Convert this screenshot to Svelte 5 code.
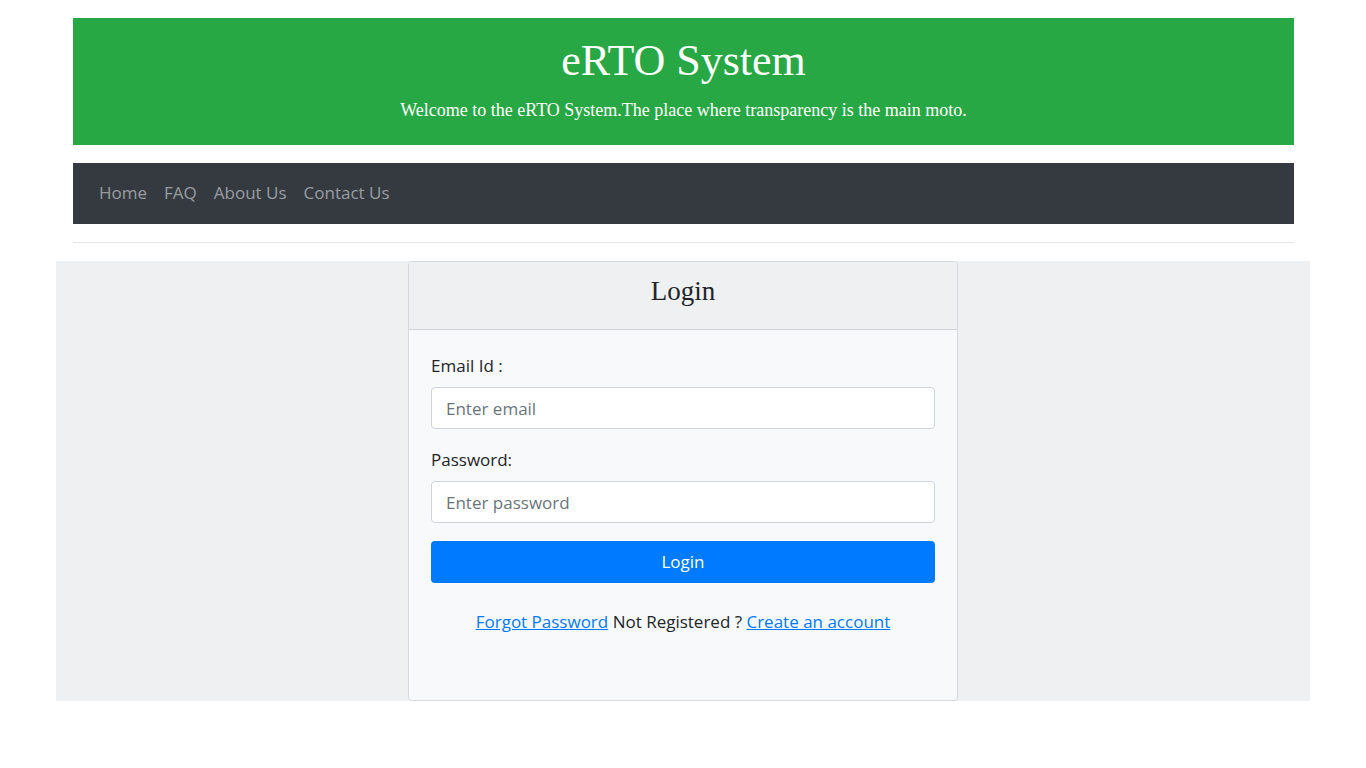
<script>
  const nav = ['Home', 'FAQ', 'About Us', 'Contact Us'];
</script>

<div class="page">
  <header>
    <h1>eRTO System</h1>
    <p>Welcome to the eRTO System.The place where transparency is the main moto.</p>
  </header>
  <nav>
    {#each nav as item}
      <a href="#top">{item}</a>
    {/each}
  </nav>
  <hr />
  <main>
    <section class="card">
      <div class="card-head"><h2>Login</h2></div>
      <form onsubmit={(e) => e.preventDefault()}>
        <label for="email">Email Id :</label>
        <input id="email" type="email" placeholder="Enter email" />
        <label for="password">Password:</label>
        <input id="password" type="password" placeholder="Enter password" />
        <button type="submit">Login</button>
        <p class="links"><a href="#forgot">Forgot Password</a> Not Registered ? <a href="#create">Create an account</a></p>
      </form>
    </section>
  </main>
</div>

<style>
  :global(body) {
    margin: 0;
    background: #fff;
  }
  .page {
    box-sizing: border-box;
    padding: 18px 56px 0;
    font-family: "Segoe UI", "Open Sans", "Noto Sans", sans-serif;
    font-size: 17px;
    line-height: 26px;
    color: #212529;
  }
  header {
    margin: 0 16px 18px 17px;
    padding: 16px 0 21px;
    background: #28a745;
    color: #fff;
    text-align: center;
    font-family: "Times New Roman", "Liberation Serif", serif;
  }
  h1 {
    margin: 0 0 8px;
    font-size: 44px;
    line-height: 54px;
    font-weight: 400;
  }
  header p {
    margin: 0;
    font-size: 18px;
    line-height: 28px;
  }
  nav {
    display: flex;
    flex-wrap: wrap;
    align-items: center;
    gap: 17px;
    margin: 0 16px 18px 17px;
    padding: 17px 26px 18px;
    background: #343a40;
  }
  nav a {
    color: #9a9da0;
    text-decoration: none;
  }
  hr {
    margin: 0 16px 18px 17px;
    border: 0;
    border-top: 1px solid #e5e5e5;
  }
  main {
    display: flex;
    justify-content: center;
    background: #eff0f2;
  }
  .card {
    box-sizing: border-box;
    flex: 0 1 550px;
    border: 1px solid #d6d8db;
    border-radius: 4px;
    background: #f8f9fb;
    overflow: hidden;
  }
  .card-head {
    padding: 13px 22px 22px;
    border-bottom: 1px solid #d0d3d7;
    background: #eff0f2;
    text-align: center;
  }
  h2 {
    margin: 0;
    font-family: "Times New Roman", "Liberation Serif", serif;
    font-size: 27px;
    line-height: 32px;
    font-weight: 400;
  }
  form {
    padding: 23px 22px 65px;
  }
  label {
    display: block;
    margin-bottom: 8px;
  }
  input {
    box-sizing: border-box;
    display: block;
    width: 100%;
    height: 42px;
    margin-bottom: 18px;
    padding: 6px 14px;
    border: 1px solid #ced4da;
    border-radius: 4px;
    background: #fff;
    color: #495057;
    font: inherit;
  }
  input::placeholder {
    color: #6c757d;
    opacity: 1;
  }
  button {
    display: block;
    width: 100%;
    height: 42px;
    padding: 0;
    border: 0;
    border-radius: 4px;
    background: #007bff;
    color: #fff;
    font: inherit;
  }
  .links {
    margin: 26px 0 0;
    text-align: center;
  }
  .links a {
    color: #007bff;
    text-decoration: underline;
  }
</style>
